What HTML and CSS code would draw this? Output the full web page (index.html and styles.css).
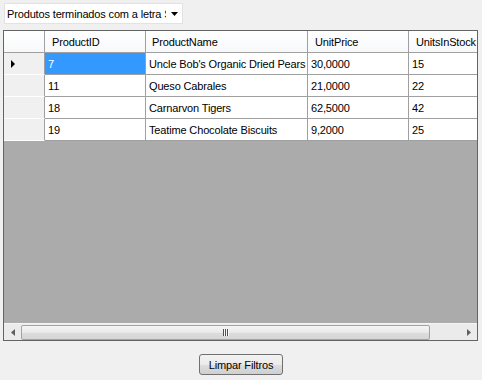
FILE: index.html
```html
<!DOCTYPE html>
<html lang="pt-BR">
<head>
<meta charset="UTF-8" />
<title>Produtos</title>
<link rel="stylesheet" href="styles.css">
</head>
<body>

<div class="form">
  <div class="combo">
    <span class="combo-text">Produtos terminados com a letra S</span>
    <svg class="combo-arrow" width="7" height="4" viewBox="0 0 7 4"><path d="M0 0 L7 0 L3.5 4 Z" fill="#000"/></svg>
  </div>

  <div class="grid">
    <div class="grid-body">
      <div class="row head">
        <div class="cell rowhead"></div>
        <div class="cell c1">ProductID</div>
        <div class="cell c2">ProductName</div>
        <div class="cell c3">UnitPrice</div>
        <div class="cell c4">UnitsInStock</div>
      </div>
      <div class="row">
        <div class="cell rowhead"><span class="current"></span></div>
        <div class="cell c1 selected">7</div>
        <div class="cell c2">Uncle Bob's Organic Dried Pears</div>
        <div class="cell c3">30,0000</div>
        <div class="cell c4">15</div>
      </div>
      <div class="row">
        <div class="cell rowhead"></div>
        <div class="cell c1">11</div>
        <div class="cell c2">Queso Cabrales</div>
        <div class="cell c3">21,0000</div>
        <div class="cell c4">22</div>
      </div>
      <div class="row">
        <div class="cell rowhead"></div>
        <div class="cell c1">18</div>
        <div class="cell c2">Carnarvon Tigers</div>
        <div class="cell c3">62,5000</div>
        <div class="cell c4">42</div>
      </div>
      <div class="row">
        <div class="cell rowhead"></div>
        <div class="cell c1">19</div>
        <div class="cell c2">Teatime Chocolate Biscuits</div>
        <div class="cell c3">9,2000</div>
        <div class="cell c4">25</div>
      </div>
      <div class="empty"></div>
    </div>
    <div class="hscroll">
      <div class="sb-btn">
        <svg width="4" height="7" viewBox="0 0 4 7"><path d="M4 0 L0 3.5 L4 7 Z" fill="#606060"/></svg>
      </div>
      <div class="sb-thumb">
        <span class="grip"></span><span class="grip"></span><span class="grip"></span>
      </div>
      <div class="sb-track"></div>
      <div class="sb-btn">
        <svg width="4" height="7" viewBox="0 0 4 7"><path d="M0 0 L4 3.5 L0 7 Z" fill="#606060"/></svg>
      </div>
    </div>
  </div>

  <div class="actions">
    <button class="btn">Limpar Filtros</button>
  </div>
</div>

</body>
</html>
```

FILE: styles.css
```css
* {
  box-sizing: border-box;
}
body {
  margin: 0;
  width: 482px;
  height: 380px;
  overflow: hidden;
  background-color: #f0f0f0;
  font-family: 'Liberation Sans', Arial, sans-serif;
  font-size: 11px;
  letter-spacing: -0.15px;
  color: #000;
}
.form {
  padding: 3px 4px 0 3px;
}

/* Combo de filtro */
.combo {
  margin-left: 1px;
  width: 179px;
  height: 21px;
  background: #fff;
  border: 1px solid #e2e2e2;
  display: flex;
  align-items: center;
}
.combo-text {
  width: 161px;
  padding-left: 2px;
  white-space: nowrap;
  overflow: hidden;
}
.combo-arrow {
  margin-left: 5px;
  margin-top: 1px;
}

/* Grade */
.grid {
  margin-top: 6px;
  width: 475px;
  height: 311px;
  border: 1px solid #646464;
  display: flex;
  flex-direction: column;
  overflow: hidden;
}
.grid-body {
  flex: 1;
  display: flex;
  flex-direction: column;
  overflow: hidden;
}
.row {
  display: flex;
  height: 22px;
  flex-shrink: 0;
  background: #fff;
}
.row.head {
  background: linear-gradient(#ffffff, #f7f8fa);
}
.cell {
  flex-shrink: 0;
  height: 100%;
  border-right: 1px solid #a0a0a0;
  border-bottom: 1px solid #a0a0a0;
  padding-left: 3px;
  display: flex;
  align-items: center;
  white-space: nowrap;
  overflow: hidden;
}
.head .cell {
  padding-left: 7px;
}
.head .c2 {
  padding-left: 6px;
}
.rowhead {
  width: 41px;
  background: #f0f0f0;
  border-bottom-color: #ffffff;
  padding-left: 7px;
}
.head .rowhead {
  background: transparent;
  border-bottom-color: #a0a0a0;
}
.c1 { width: 101px; }
.c2 { width: 162px; }
.c3 { width: 101px; }
.c4 { width: 101px; }
.selected {
  background: #3399ff;
  color: #fff;
}
.current {
  width: 0;
  height: 0;
  border-top: 4px solid transparent;
  border-bottom: 4px solid transparent;
  border-left: 4px solid #000;
}
.empty {
  flex: 1;
  background: #ababab;
}

/* Barra de rolagem */
.hscroll {
  height: 17px;
  flex-shrink: 0;
  display: flex;
  align-items: center;
  background: #ebebeb;
  border-top: 1px solid #f4f4f4;
}
.sb-btn {
  width: 17px;
  height: 100%;
  display: flex;
  align-items: center;
  justify-content: center;
}
.sb-thumb {
  width: 409px;
  height: 15px;
  border: 1px solid #a3a3a3;
  border-radius: 2px;
  background: linear-gradient(#f5f5f5, #e9e9e9 50%, #dcdcdc 51%, #d6d6d6);
  display: flex;
  align-items: center;
  justify-content: center;
  gap: 1px;
}
.grip {
  width: 1px;
  height: 7px;
  background: #505050;
  box-shadow: 1px 0 0 #f8f8f8;
}
.sb-track {
  flex: 1;
}

/* Botão */
.actions {
  margin-top: 13px;
  display: flex;
  justify-content: center;
  padding-left: 1px;
}
.btn {
  width: 84px;
  height: 21px;
  font-family: 'Liberation Sans', Arial, sans-serif;
  font-size: 11px;
  letter-spacing: -0.15px;
  color: #000;
  border: 1px solid #707070;
  border-radius: 3px;
  background: linear-gradient(#f2f2f2, #ebebeb 50%, #dddddd 51%, #cfcfcf);
  padding: 0;
}
```
